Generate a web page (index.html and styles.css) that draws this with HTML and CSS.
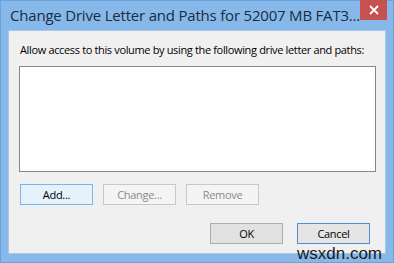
FILE: index.html
```html
<!DOCTYPE html>
<html>
<head>
<meta charset="utf-8">
<link rel="stylesheet" href="styles.css">
</head>
<body>
<div class="window">
  <div class="titlebar">
    <div class="title">Change Drive Letter and Paths for 52007 MB FAT3...</div>
    <div class="close">
      <svg width="10" height="10" viewBox="0 0 10 10"><path d="M1 1 L9 9 M9 1 L1 9" stroke="#fff" stroke-width="1.8" fill="none"/></svg>
    </div>
  </div>
  <div class="client">
    <div class="label">Allow access to this volume by using the following drive letter and paths:</div>
    <div class="listbox"></div>
    <div class="actions">
      <div class="btn focused">Add...</div>
      <div class="btn disabled">Change...</div>
      <div class="btn disabled">Remove</div>
    </div>
    <div class="footer">
      <div class="btn">OK</div>
      <div class="btn default">Cancel</div>
    </div>
  </div>
  <div class="watermark">wsxdn.com</div>
</div>
</body>
</html>
```

FILE: styles.css
```css
html, body {
  margin: 0;
  padding: 0;
  width: 394px;
  height: 263px;
  overflow: hidden;
  background: #7fb4e8;
}
.window {
  position: relative;
  box-sizing: border-box;
  width: 394px;
  height: 263px;
  background: #86b9ea;
  border: 1px solid #6aa3dc;
  display: flex;
  flex-direction: column;
  font-family: "Open Sans", "Noto Sans", sans-serif;
}
.titlebar {
  height: 29px;
  display: flex;
  align-items: flex-start;
  justify-content: space-between;
  padding-left: 9px;
}
.title {
  font-size: 15px;
  color: #1b2c3f;
  margin-top: 4px;
  letter-spacing: -0.2px;
  white-space: nowrap;
}
.close {
  width: 31px;
  height: 20px;
  margin-top: -1px;
  margin-right: 6px;
  background: #c75050;
  display: flex;
  align-items: center;
  justify-content: center;
}
.client {
  margin: 0 7px;
  height: 224px;
  background: #f0f0f0;
  border: 1px solid #a9c8e8;
  box-sizing: border-box;
  padding: 10px 9px 0 10px;
  display: flex;
  flex-direction: column;
}
.label {
  font-size: 11px;
  color: #000;
  padding-left: 1px;
  height: 16px;
  line-height: 16px;
  margin-top: 1px;
  white-space: nowrap;
  letter-spacing: -0.35px;
}
.listbox {
  margin-top: 8px;
  height: 104px;
  background: #fff;
  border: 1px solid #828790;
}
.actions {
  display: flex;
  gap: 10px;
  margin-top: 12px;
  padding-left: 1px;
}
.footer {
  display: flex;
  gap: 14px;
  justify-content: flex-end;
  margin-top: 18px;
  padding-right: 6px;
}
.btn {
  box-sizing: border-box;
  width: 73px;
  height: 21px;
  border: 1px solid #adadad;
  background: #e1e1e1;
  font-size: 11px;
  letter-spacing: -0.3px;
  color: #000;
  display: flex;
  align-items: center;
  justify-content: center;
}
.btn.focused {
  border-color: #7eb4ea;
  background: #e5f1fb;
}
.btn.disabled {
  border-color: #c8c8c8;
  background: #f4f4f4;
  color: #8a8a8a;
}
.btn.default {
  border-color: #4d8ed0;
  background: #e5e5e5;
}
.watermark {
  position: absolute;
  right: 11px;
  bottom: 0px;
  font-family: "Liberation Sans", Arial, sans-serif;
  font-size: 17px;
  line-height: 16px;
  color: #1a1a1a;
}
```
